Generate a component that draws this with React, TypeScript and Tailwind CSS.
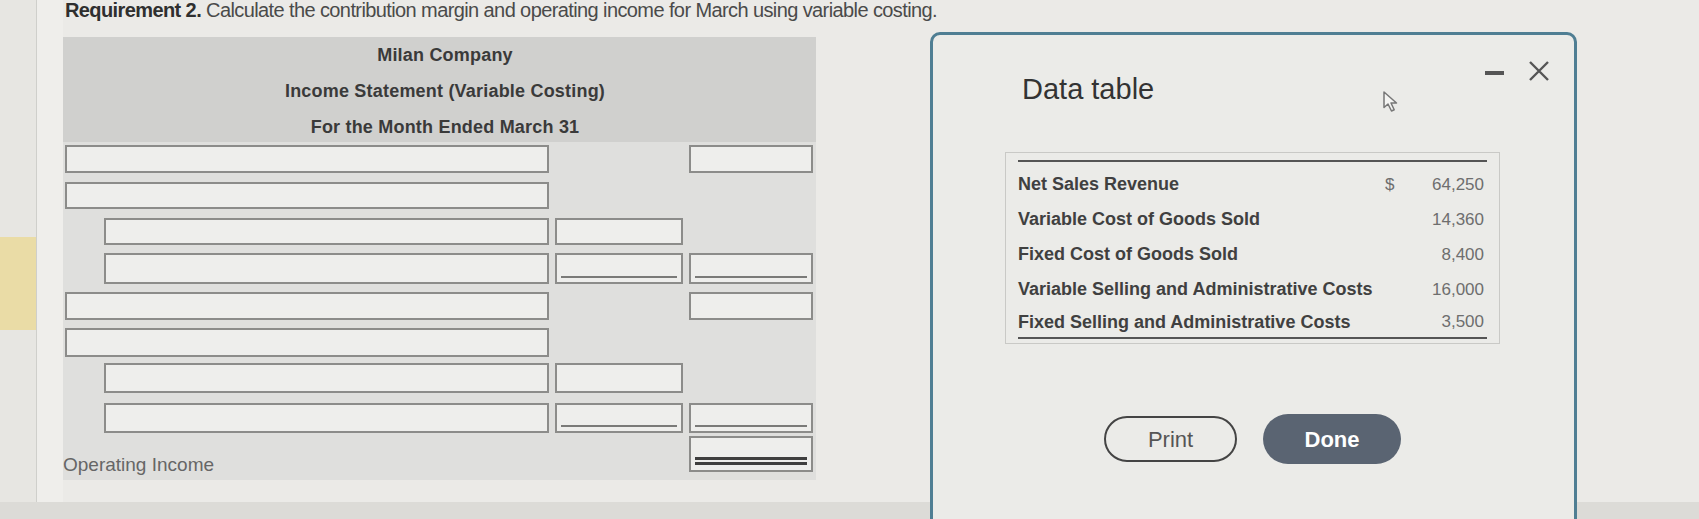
import React from "react";

type U = "none" | "single" | "double";

function Box({ w, h = 28, u = "none", indent = 0 }: { w: number; h?: number; u?: U; indent?: number }) {
  return (
    <div className="relative border-2 border-[#8c8c8a] bg-[#eeeeec]" style={{ width: w, height: h, marginLeft: indent }}>
      {u === "single" && <div className="absolute left-[4px] right-[4px] bottom-[4px] h-[2px] bg-[#7a7a78]" />}
      {u === "double" && (
        <div className="absolute left-[4px] right-[4px] bottom-[5px] flex flex-col gap-[2px]">
          <div className="h-[3px] bg-[#3f3f3f]" />
          <div className="h-[3px] bg-[#3f3f3f]" />
        </div>
      )}
    </div>
  );
}

function Row({ children, h = 36 }: { children: React.ReactNode; h?: number }) {
  return (
    <div className="grid grid-cols-[484px_128px_124px] gap-x-[6px] items-start" style={{ height: h }}>
      {children}
    </div>
  );
}

const data = [
  { label: "Net Sales Revenue", dollar: true, value: "64,250" },
  { label: "Variable Cost of Goods Sold", dollar: false, value: "14,360" },
  { label: "Fixed Cost of Goods Sold", dollar: false, value: "8,400" },
  { label: "Variable Selling and Administrative Costs", dollar: false, value: "16,000" },
];

export default function App() {
  return (
    <div className="w-[1699px] h-[519px] relative overflow-hidden bg-[#ebeae7] font-['Liberation_Sans',Arial,sans-serif]">
      <div className="flex h-[502px]">
        <div className="w-[37px] shrink-0 border-r border-[#cfcfcb] bg-[#e7e6e2] pt-[237px]">
          <div className="h-[93px] bg-[#eadca6]" />
        </div>
        <div className="w-[26px] shrink-0 bg-[#efeeeb]" />
        <div className="flex flex-col shrink-0">
          <div className="h-[37px] pl-[2px] text-[20px] leading-[21px] text-[#4a4a4a] whitespace-nowrap tracking-[-0.6px]">
            <span className="font-bold text-[#2f2f2f]">Requirement 2.</span> Calculate the contribution margin and operating income for March using variable costing.
          </div>
          <div className="w-[753px] h-[443px] bg-[#dfdfdd]">
            <div className="h-[105px] bg-[#d0d0ce] flex flex-col items-center pl-[11px] text-[18px] tracking-[0.2px] font-bold text-[#3a3a3a]">
              <div className="h-[36px] leading-[36px]">Milan Company</div>
              <div className="h-[36px] leading-[36px]">Income Statement (Variable Costing)</div>
              <div className="h-[36px] leading-[36px]">For the Month Ended March 31</div>
            </div>
            <div className="pt-[3px] pl-[2px]">
              <Row h={37}>
                <Box w={484} />
                <div />
                <Box w={124} />
              </Row>
              <Row h={36}>
                <Box w={484} h={27} />
                <div />
                <div />
              </Row>
              <Row h={35}>
                <Box w={445} indent={39} h={27} />
                <Box w={128} h={27} />
                <div />
              </Row>
              <Row h={39}>
                <Box w={445} indent={39} h={31} />
                <Box w={128} h={31} u="single" />
                <Box w={124} h={31} u="single" />
              </Row>
              <Row h={36}>
                <Box w={484} h={28} />
                <div />
                <Box w={124} h={28} />
              </Row>
              <Row h={35}>
                <Box w={484} h={29} />
                <div />
                <div />
              </Row>
              <Row h={40}>
                <Box w={445} indent={39} h={30} />
                <Box w={128} h={30} />
                <div />
              </Row>
              <Row h={33}>
                <Box w={445} indent={39} h={30} />
                <Box w={128} h={30} u="single" />
                <Box w={124} h={30} u="single" />
              </Row>
              <Row h={40}>
                <div className="h-[40px] flex items-end -ml-[2px] text-[19px] leading-[22px] text-[#666]">Operating Income</div>
                <div />
                <Box w={124} h={36} u="double" />
              </Row>
            </div>
          </div>
        </div>
        <div className="flex-1" />
      </div>
      <div className="h-[17px] bg-[#dcdbd7]" />

      {/* Data table dialog */}
      <div className="absolute left-[930px] top-[32px] w-[647px] h-[500px] border-[3px] border-[#4f7e93] rounded-[10px] bg-[#ebebe8]">
        <div className="relative h-full">
          <div className="absolute left-[552px] top-[36px] w-[19px] h-[4px] bg-[#555]" />
          <svg className="absolute left-[595px] top-[26px]" width="22" height="20" viewBox="0 0 22 20">
            <path d="M2 1 L20 19 M20 1 L2 19" stroke="#555" strokeWidth="2.4" fill="none" />
          </svg>
          <svg className="absolute left-[449px] top-[55px]" width="17" height="23" viewBox="0 0 17 23">
            <path d="M2 2 L2 17.5 L6 14 L9.5 21 L12.2 19.7 L9 13 L14.5 13 Z" fill="#f4f4f2" stroke="#777" strokeWidth="1.5" strokeLinejoin="round" />
          </svg>

          <div className="pt-[38px] pl-[89px] text-[29px] leading-[32px] text-[#333]">Data table</div>

          <div className="ml-[72px] mt-[47px] w-[495px] border border-[#c9c9c6] px-[12px] pt-[7px] pb-[4px]">
            <div className="h-[2px] bg-[#555]" />
            <div className="pt-[5px]">
              {data.map((r) => (
                <div key={r.label} className="h-[35px] flex items-center">
                  <div className="flex-1 text-[18px] font-bold text-[#404040]">{r.label}</div>
                  <div className="w-[14px] text-[17px] text-[#6e6e6e]">{r.dollar ? "$" : ""}</div>
                  <div className="w-[88px] text-right pr-[3px] text-[17px] text-[#6e6e6e]">{r.value}</div>
                </div>
              ))}
              <div className="h-[32px] flex items-center border-b-2 border-[#555]">
                <div className="flex-1 text-[18px] font-bold text-[#404040]">Fixed Selling and Administrative Costs</div>
                <div className="w-[14px]" />
                <div className="w-[88px] text-right pr-[3px] text-[17px] text-[#6e6e6e]">3,500</div>
              </div>
            </div>
          </div>

          <div className="mt-[70px] ml-[171px] flex items-center gap-[26px]">
            <div className="w-[133px] h-[46px] rounded-full border-2 border-[#444] flex items-center justify-center text-[22px] text-[#555]">Print</div>
            <div className="w-[138px] h-[50px] rounded-full bg-[#5a6472] flex items-center justify-center text-[22px] font-bold text-white">Done</div>
          </div>
        </div>
      </div>
    </div>
  );
}
